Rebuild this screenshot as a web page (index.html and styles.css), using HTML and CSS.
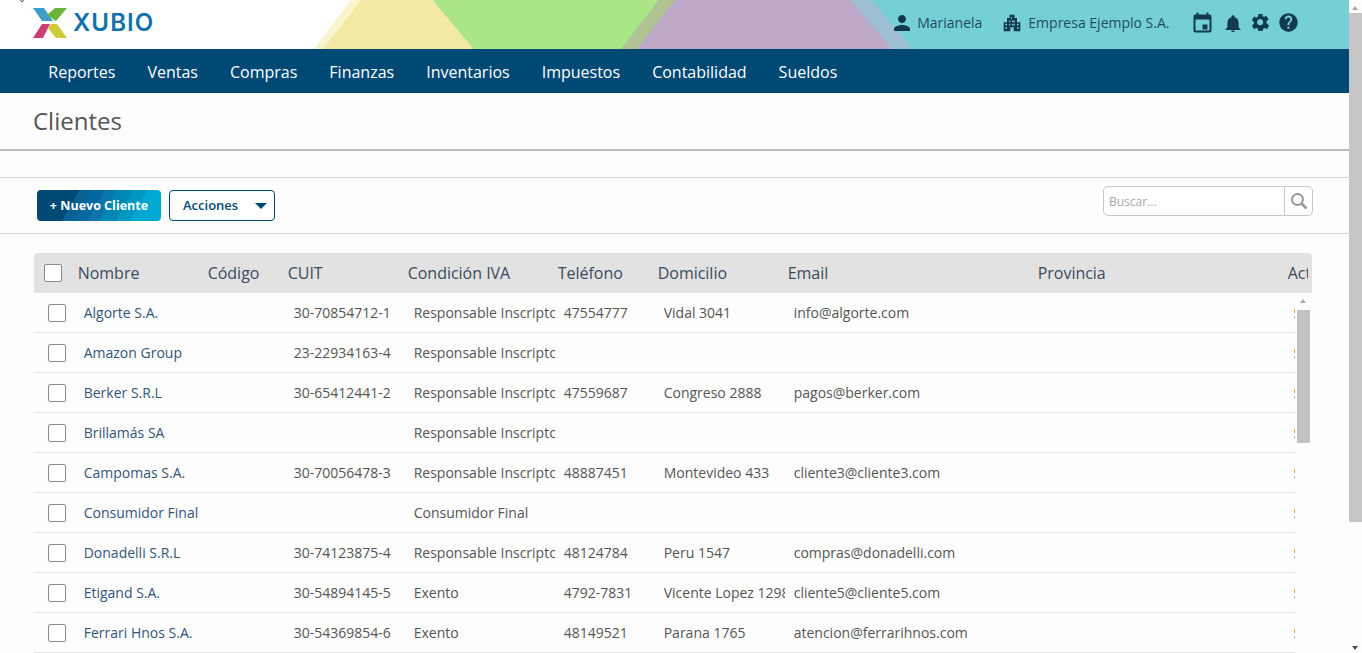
FILE: index.html
```html
<!DOCTYPE html>
<html lang="es">
<head>
<meta charset="utf-8">
<title>Clientes - Xubio</title>
<link rel="stylesheet" href="styles.css">
</head>
<body>
<div class="app">
  <main class="main">
    <header class="topbar">
      <svg class="shapes" viewBox="0 0 1349 49" width="1349" height="49" aria-hidden="true">
        <polygon points="351,0 361,0 323,49 314,49" fill="#faf4cd"/>
        <polygon points="361,0 433,0 474,49 323,49" fill="#f2e9a4"/>
        <polygon points="433,0 659,0 621,49 474,49" fill="#aae586"/>
        <polygon points="659,0 675,0 637,49 621,49" fill="#b2c393"/>
        <polygon points="675,0 851,0 892,49 637,49" fill="#bea8c8"/>
        <polygon points="851,0 872,0 913,49 892,49" fill="#9fbfd4"/>
      </svg>
      <i class="cursor-mark"></i>
      <a class="logo">
        <svg width="36" height="32" viewBox="0 0 36 32" aria-hidden="true">
          <polygon points="0,1 11,1 20,14 9,14" fill="#3c9fc9"/>
          <polygon points="22,1 34,1 23,14 14,8" fill="#6bb536"/>
          <polygon points="9,17 17,17 10,31 0,31" fill="#cf3c72"/>
          <polygon points="18,17 24,17 34,31 23,31 15,21" fill="#cdcb38"/>
        </svg>
        <span class="logo-text">XUBIO</span>
      </a>
      <div class="user-area">
        <span class="user-item">
          <svg class="i18" viewBox="0 0 24 24" aria-hidden="true"><path d="M12 12c2.700 0 4.800-2.200 4.800-4.800S14.700 2.400 12 2.400 7.200 4.600 7.200 7.200 9.300 12 12 12zm0 2.400c-3.200 0-9.600 1.600-9.600 4.800v2.400h19.200v-2.400c0-3.200-6.400-4.800-9.600-4.800z"/></svg>
          Marianela
        </span>
        <span class="user-item company">
          <svg class="i18" viewBox="0 0 24 24" aria-hidden="true"><path d="M9 2h6v4h3v5h4v11h-8v-5h-4v5H2V11h4V6h3V2zm1.500 3v2H12V5h-1.500zm-2 4v2H10V9H8.500zm3.500 0v2h1.500V9H12zm2 0v2h1.500V9H14zM4 13v2h2v-2H4zm0 4v2h2v-2H4zm4.500-4v2H10v-2H8.500zm3.500 0v2h1.500v-2H12zm2 0v2h1.500v-2H14zm4 0v2h2v-2h-2zm0 4v2h2v-2h-2z" fill-rule="evenodd"/></svg>
          Empresa Ejemplo S.A.
        </span>
        <span class="tools">
          <svg class="i-cal" viewBox="2.500 0.500 19 21" aria-hidden="true"><path d="M17 13h-5v5h5v-5zM16 1v2H8V1H6v2H5c-1.100 0-2 .9-2 2v14c0 1.100.9 2 2 2h14c1.100 0 2-.9 2-2V5c0-1.100-.9-2-2-2h-1V1h-2zm3 18H5V8h14v11z"/></svg>
          <svg class="i-bell" viewBox="0 0 24 24" aria-hidden="true"><path d="M12 23c1.300 0 2.300-1 2.300-2.200H9.700C9.700 22 10.700 23 12 23zm7.500-6.500v-6c0-3.600-2-6.600-5.500-7.400v-.8C14 1.200 13.100.3 12 .3s-2 .9-2 2v.8c-3.500.8-5.500 3.800-5.500 7.400v6L2 19v1h20v-1l-2.500-2.500z"/></svg>
          <svg class="i-gear" viewBox="0 0 24 24" aria-hidden="true"><path d="M21.200 13.300c.1-.4.100-.9.100-1.300s0-.9-.1-1.300l2.700-2.100c.2-.2.300-.5.200-.8l-2.600-4.500c-.2-.3-.5-.4-.8-.3l-3.200 1.300c-.7-.5-1.400-.9-2.200-1.300L15.800.6c0-.3-.3-.6-.6-.6H9.900c-.4 0-.6.300-.7.600l-.5 3.400c-.8.300-1.500.8-2.200 1.300L3.300 4c-.3-.1-.6 0-.8.300L0 8.800c-.2.300-.1.600.2.800l2.700 2.100c-.1.400-.1.900-.1 1.300s0 .9.100 1.300L.2 16.400c-.2.200-.3.500-.2.800l2.600 4.500c.2.300.5.400.8.300l3.200-1.300c.7.500 1.400.9 2.200 1.300l.5 3.400c.1.300.3.600.7.600h5.200c.4 0 .6-.3.600-.6l.5-3.400c.8-.3 1.500-.8 2.200-1.300l3.200 1.300c.3.100.6 0 .8-.3l2.600-4.500c.2-.3.100-.6-.2-.8l-2.700-2.100zM12 16.500c-2.500 0-4.500-2-4.500-4.500s2-4.500 4.500-4.500 4.500 2 4.500 4.500-2 4.500-4.500 4.500z" transform="scale(.96)"/></svg>
          <svg class="i-help" viewBox="0 0 24 24" aria-hidden="true"><path d="M12 1.500C6.200 1.500 1.500 6.200 1.500 12S6.200 22.500 12 22.500 22.500 17.800 22.500 12 17.800 1.500 12 1.500zm1 17.500h-2.200v-2.200H13V19zm2.300-8.100l-1 1c-.8.800-1.300 1.500-1.300 3.100h-2.200v-.6c0-1.200.5-2.300 1.300-3.100l1.400-1.400c.4-.4.600-.9.600-1.500 0-1.200-1-2.200-2.200-2.200S9.800 7.200 9.800 8.400H7.700c0-2.400 1.900-4.300 4.300-4.300s4.300 1.900 4.300 4.300c0 1-.4 1.800-1 2.500z"/></svg>
        </span>
      </div>
    </header>

    <nav class="navbar">
      <a>Reportes</a><a>Ventas</a><a>Compras</a><a>Finanzas</a><a>Inventarios</a><a>Impuestos</a><a>Contabilidad</a><a>Sueldos</a>
    </nav>

    <section class="title-bar"><h1>Clientes</h1></section>

    <section class="toolbar">
      <div class="actions">
        <button class="btn-primary">+ Nuevo Cliente</button>
        <button class="btn-outline"><span>Acciones</span><i class="caret"></i></button>
      </div>
      <div class="search">
        <span class="search-input">Buscar...</span>
        <span class="search-btn">
          <svg width="18" height="18" viewBox="0 0 18 18" aria-hidden="true"><circle cx="7.500" cy="7.500" r="5.500" fill="none" stroke="#999" stroke-width="2"/><path d="M11.500 11.500L16.500 16.500" stroke="#999" stroke-width="2.600"/></svg>
        </span>
      </div>
    </section>

    <section class="grid">
      <div class="grid-head">
        <span class="check head-check"></span>
        <span class="h c-name">Nombre</span>
        <span class="h c-code">Código</span>
        <span class="h c-cuit">CUIT</span>
        <span class="h c-iva">Condición IVA</span>
        <span class="h c-tel">Teléfono</span>
        <span class="h c-dom">Domicilio</span>
        <span class="h c-mail">Email</span>
        <span class="h c-prov">Provincia</span>
        <span class="h c-act">Activo</span>
      </div>
      <div class="grid-body">
        <div class="rows">
          <div class="row"><span class="check"></span><a class="d c-name">Algorte S.A.</a><span class="d c-code"></span><span class="d c-cuit">30-70854712-1</span><span class="d c-iva">Responsable Inscripto</span><span class="d c-tel">47554777</span><span class="d c-dom">Vidal 3041</span><span class="d c-mail">info@algorte.com</span><span class="d c-prov"></span><span class="marks"></span></div>
          <div class="row"><span class="check"></span><a class="d c-name">Amazon Group</a><span class="d c-code"></span><span class="d c-cuit">23-22934163-4</span><span class="d c-iva">Responsable Inscripto</span><span class="d c-tel"></span><span class="d c-dom"></span><span class="d c-mail"></span><span class="d c-prov"></span><span class="marks"></span></div>
          <div class="row"><span class="check"></span><a class="d c-name">Berker S.R.L</a><span class="d c-code"></span><span class="d c-cuit">30-65412441-2</span><span class="d c-iva">Responsable Inscripto</span><span class="d c-tel">47559687</span><span class="d c-dom">Congreso 2888</span><span class="d c-mail">pagos@berker.com</span><span class="d c-prov"></span><span class="marks"></span></div>
          <div class="row"><span class="check"></span><a class="d c-name">Brillamás SA</a><span class="d c-code"></span><span class="d c-cuit"></span><span class="d c-iva">Responsable Inscripto</span><span class="d c-tel"></span><span class="d c-dom"></span><span class="d c-mail"></span><span class="d c-prov"></span><span class="marks"></span></div>
          <div class="row"><span class="check"></span><a class="d c-name">Campomas S.A.</a><span class="d c-code"></span><span class="d c-cuit">30-70056478-3</span><span class="d c-iva">Responsable Inscripto</span><span class="d c-tel">48887451</span><span class="d c-dom">Montevideo 433</span><span class="d c-mail">cliente3@cliente3.com</span><span class="d c-prov"></span><span class="marks"></span></div>
          <div class="row"><span class="check"></span><a class="d c-name">Consumidor Final</a><span class="d c-code"></span><span class="d c-cuit"></span><span class="d c-iva">Consumidor Final</span><span class="d c-tel"></span><span class="d c-dom"></span><span class="d c-mail"></span><span class="d c-prov"></span><span class="marks"></span></div>
          <div class="row"><span class="check"></span><a class="d c-name">Donadelli S.R.L</a><span class="d c-code"></span><span class="d c-cuit">30-74123875-4</span><span class="d c-iva">Responsable Inscripto</span><span class="d c-tel">48124784</span><span class="d c-dom">Peru 1547</span><span class="d c-mail">compras@donadelli.com</span><span class="d c-prov"></span><span class="marks"></span></div>
          <div class="row"><span class="check"></span><a class="d c-name">Etigand S.A.</a><span class="d c-code"></span><span class="d c-cuit">30-54894145-5</span><span class="d c-iva">Exento</span><span class="d c-tel">4792-7831</span><span class="d c-dom">Vicente Lopez 1298</span><span class="d c-mail">cliente5@cliente5.com</span><span class="d c-prov"></span><span class="marks"></span></div>
          <div class="row"><span class="check"></span><a class="d c-name">Ferrari Hnos S.A.</a><span class="d c-code"></span><span class="d c-cuit">30-54369854-6</span><span class="d c-iva">Exento</span><span class="d c-tel">48149521</span><span class="d c-dom">Parana 1765</span><span class="d c-mail">atencion@ferrarihnos.com</span><span class="d c-prov"></span><span class="marks"></span></div>
        </div>
        <div class="inner-scroll"><i class="arrow-up"></i><div class="inner-thumb"></div></div>
      </div>
    </section>
  </main>
  <aside class="page-scroll"><i class="arrow-up"></i><div class="page-thumb"></div><i class="arrow-down"></i></aside>
</div>
</body>
</html>
```
FILE: styles.css
```css
* { box-sizing: border-box; }
html, body { margin: 0; height: 100%; overflow: hidden; }
body { font-family: "Open Sans", "Liberation Sans", sans-serif; font-size: 14px; color: #4a4a4a; background: #fdfdfd; }
svg { display: block; }
.app { display: flex; height: 653px; }
.main { flex: 0 0 1349px; width: 1349px; overflow: hidden; }

.topbar { position: relative; height: 49px; background: #75d0d6; display: flex; align-items: center; justify-content: space-between; padding: 0 50.500px 0 33px; }
.topbar::before { content: ""; position: absolute; left: 0; top: 0; bottom: 0; width: 400px; background: #fff; }
.shapes { position: absolute; left: 0; top: 0; }
.cursor-mark { position: absolute; left: 20px; top: -2px; width: 4px; height: 4px; border: 1px solid #555; border-radius: 50%; }
.logo { position: relative; display: flex; align-items: center; gap: 4px; margin-top: -3px; }
.logo-text { font-family: "Inter", "Open Sans", sans-serif; font-size: 24px; font-weight: 600; color: #1271ad; letter-spacing: 1.100px; line-height: 32px; }
.user-area { position: relative; display: flex; align-items: center; color: #1f4a63; margin-top: -4px; }
.user-item { display: flex; align-items: center; gap: 5px; font-size: 14px; }
.user-item svg { fill: #12394f; }
.i18 { width: 20px; height: 20px; }
.company { margin-left: 20px; gap: 6px; }
.tools { display: flex; align-items: center; margin-left: 23px; }
.tools svg { fill: #12394f; }
.i-cal { width: 19px; height: 21px; }
.i-bell { width: 18px; height: 18px; margin-left: 12px; margin-top: 2px; }
.i-gear { width: 17px; height: 17px; margin-left: 10px; }
.i-help { width: 21px; height: 21px; margin-left: 9px; }

.navbar { height: 44px; background: #004975; display: flex; align-items: center; gap: 32px; padding: 2px 0 0 48.300px; }
.navbar a { color: #fff; font-size: 16px; line-height: 22px; }

.title-bar { height: 58px; border-bottom: 2px solid #bcbcbc; padding: 11px 0 0 33px; }
.title-bar h1 { margin: 0; font-size: 24px; font-weight: 400; line-height: 33px; color: #555; }

.toolbar { margin-top: 26px; height: 57px; border-top: 1px solid #d4d4d4; border-bottom: 1px solid #d4d4d4; display: flex; align-items: flex-start; justify-content: space-between; padding: 8px 36px 0 37px; }
.actions { display: flex; gap: 8px; padding-top: 4px; }
.btn-primary { width: 124px; height: 31px; border: 0; border-radius: 4px; color: #fff; font: 700 12.500px "Open Sans", sans-serif; padding: 0; background: linear-gradient(120deg, #004975 0 30%, #0a5f95 30% 38%, #0567a0 38% 48%, #0b74ab 48% 56%, #0088b4 56% 68%, #0097c0 68% 78%, #00a8d2 78% 100%); }
.btn-outline { width: 106px; height: 31px; border: 1px solid #004975; border-radius: 4px; background: #fff; color: #004975; font: 600 13px "Open Sans", sans-serif; display: flex; align-items: center; justify-content: space-between; padding: 0 7px 2px 13px; }
.caret { width: 0; height: 0; margin-top: 2px; border: 6px solid transparent; border-top: 6px solid #004975; border-bottom: 0; }
.search { display: flex; width: 210px; height: 30px; border: 1px solid #c8c8c8; border-radius: 5px; background: #fff; }
.search-input { flex: 1; padding-left: 5px; line-height: 29px; font-size: 12px; color: #a8a8a8; }
.search-btn { width: 28px; border-left: 1px solid #c8c8c8; display: flex; align-items: center; justify-content: center; }

.grid { margin: 19px 37px 0 34px; }
.grid-head { height: 40px; width: 1278px; background: #e2e2e2; border-radius: 4px 4px 0 0; display: flex; align-items: center; padding-left: 10px; overflow: hidden; }
.check { flex: none; display: block; width: 18px; height: 18px; border: 1px solid #8a8a8a; border-radius: 2px; background: #fff; }
.head-check { margin-right: 15.700px; }
.h { flex: none; font-size: 16px; line-height: 22px; color: #3d4a5c; white-space: nowrap; overflow: hidden; letter-spacing: -.02px; }
.c-name { width: 130px; }
.c-code { width: 80px; }
.c-cuit { width: 120px; }
.c-iva { width: 150px; }
.c-tel { width: 100px; }
.c-dom { width: 130px; }
.c-mail { width: 250px; }
.c-prov { width: 250px; }
.c-act { width: 20px; }

.grid-body { display: flex; }
.rows { width: 1261px; flex: none; }
.row { height: 40px; border-bottom: 1px solid #e4e4e4; display: flex; align-items: center; padding-left: 14px; overflow: hidden; }
.row .check { margin-right: 11.700px; }
.d { flex: none; display: block; padding-left: 6px; border-right: 3px solid transparent; white-space: nowrap; overflow: hidden; line-height: 20px; height: 20px; color: #555; font-size: 14px; }
a.d { color: #33557a; }
.marks { flex: none; width: 1px; height: 9px; margin-left: 6.300px; margin-top: 2px; background: linear-gradient(#e8a32c 0 4px, transparent 4px 7px, #c4b6a6 7px 9px); }
.inner-scroll { margin-left: 2px; width: 13px; position: relative; padding-top: 17px; }
.inner-thumb { height: 133px; background: #c2c2c2; }
.arrow-up { position: absolute; left: 3px; top: 6px; width: 0; height: 0; border: 3.500px solid transparent; border-bottom: 4px solid #a8a8a8; border-top: 0; }
.page-scroll { flex: 0 0 13px; position: relative; background: #fdfdfd; padding-top: 13px; }
.page-thumb { height: 509px; background: #c6c6c6; }
.arrow-down { position: absolute; left: 3px; bottom: 3px; width: 0; height: 0; border: 3.500px solid transparent; border-top: 4px solid #505050; border-bottom: 0; }
```
